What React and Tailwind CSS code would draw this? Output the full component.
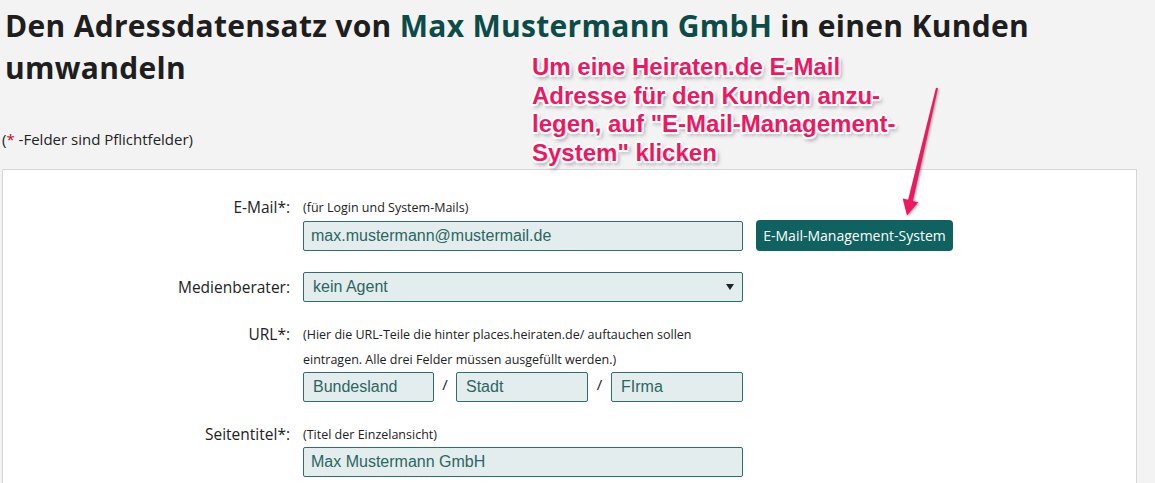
import React from 'react';

const inputCls =
  'h-[30px] border border-[#2f6e6a] bg-[#e4eded] rounded-[2px] flex items-center text-[16px] text-[#2a6662] font-["Liberation_Sans",Arial,sans-serif]';

function Row({ label, labelLead = 'leading-[25px]', className = '', children }) {
  return (
    <div className={`flex items-start ${className}`}>
      <div className={`w-[287px] shrink-0 text-right text-[15.5px] text-[#222] ${labelLead}`}>
        {label}
      </div>
      <div className="ml-[13px]">{children}</div>
    </div>
  );
}

function Hint({ children }) {
  return <div className="text-[12.5px] leading-[25px] text-[#222]">{children}</div>;
}

export default function App() {
  return (
    <main className='relative min-h-screen overflow-hidden bg-[#f3f3f3] font-["Open_Sans",sans-serif]'>
      <h1 className="pt-[5px] pl-[5px] text-[30px] leading-[42px] tracking-[0.3px] font-bold text-[#1e1e1e]">
        Den Adressdatensatz von <span className="text-[#0b4c49]">Max Mustermann GmbH</span> in einen Kunden
        <br />
        umwandeln
      </h1>

      <p className="mt-[40px] pl-[2px] text-[15px] leading-[20px] text-[#222]">
        (<span className="text-[#d0021b]">*</span> -Felder sind Pflichtfelder)
      </p>

      {/* Form panel */}
      <section className="mt-[20px] ml-[2px] w-[1135px] border border-[#d6d6d6] bg-white pt-[25px] pb-[40px]">
        <Row label="E-Mail*:">
          <Hint>(für Login und System-Mails)</Hint>
          <div className="flex items-center">
            <div className={`${inputCls} w-[440px] px-[7px]`}>max.mustermann@mustermail.de</div>
            <button className="ml-[13px] h-[31px] w-[197px] rounded-[4px] bg-[#0f625f] text-[14px] font-medium text-white">
              E-Mail-Management-System
            </button>
          </div>
        </Row>

        <Row label="Medienberater:" labelLead="leading-[30px]" className="mt-[21px]">
          <div className={`${inputCls} w-[440px] pl-[9px] pr-[8px] justify-between`}>
            <span>kein Agent</span>
            <svg width="8" height="6" viewBox="0 0 8 6">
              <path d="M0 0 L8 0 L4 6 Z" fill="#222" />
            </svg>
          </div>
        </Row>

        <Row label="URL*:" className="mt-[20px]">
          <Hint>
            (Hier die URL-Teile die hinter places.heiraten.de/ auftauchen sollen
            <br />
            eintragen. Alle drei Felder müssen ausgefüllt werden.)
          </Hint>
          <div className="flex items-start w-[440px]">
            <div className={`${inputCls} w-[131px] px-[9px]`}>Bundesland</div>
            <span className="w-[22px] text-center text-[15px] leading-[24px] text-[#222]">/</span>
            <div className={`${inputCls} w-[132px] px-[9px]`}>Stadt</div>
            <span className="w-[23px] text-center text-[15px] leading-[24px] text-[#222]">/</span>
            <div className={`${inputCls} w-[132px] px-[9px]`}>FIrma</div>
          </div>
        </Row>

        <Row label="Seitentitel*:" className="mt-[20px]">
          <Hint>(Titel der Einzelansicht)</Hint>
          <div className={`${inputCls} w-[440px] px-[7px]`}>Max Mustermann GmbH</div>
        </Row>
      </section>

      {/* Annotation overlay */}
      <div className='absolute left-[532px] top-[53px] text-[24px] leading-[28.5px] font-bold text-[#f01760] font-["Liberation_Sans",Arial,sans-serif] [text-shadow:-1.5px_-1.5px_1px_#fff,1.5px_-1.5px_1px_#fff,-1.5px_1.5px_1px_#fff,1.5px_1.5px_1px_#fff,0_2px_1px_#fff,0_-2px_1px_#fff,2px_0_1px_#fff,-2px_0_1px_#fff,2px_3px_4px_rgba(0,0,0,0.5)]'>
        Um eine Heiraten.de E-Mail
        <br />
        Adresse für den Kunden anzu-
        <br />
        legen, auf "E-Mail-Management-
        <br />
        System" klicken
      </div>

      <svg
        className="absolute left-0 top-0 pointer-events-none drop-shadow-[1px_1px_1px_rgba(0,0,0,0.35)]"
        width="1155"
        height="483"
        viewBox="0 0 1155 483"
      >
        <path
          d="M936 87.8 L938 88.2 L912.9 201 L918.3 202.2 L907 215.5 L902.7 198.6 L908.1 199.8 Z"
          fill="#f01760"
        />
      </svg>
    </main>
  );
}
